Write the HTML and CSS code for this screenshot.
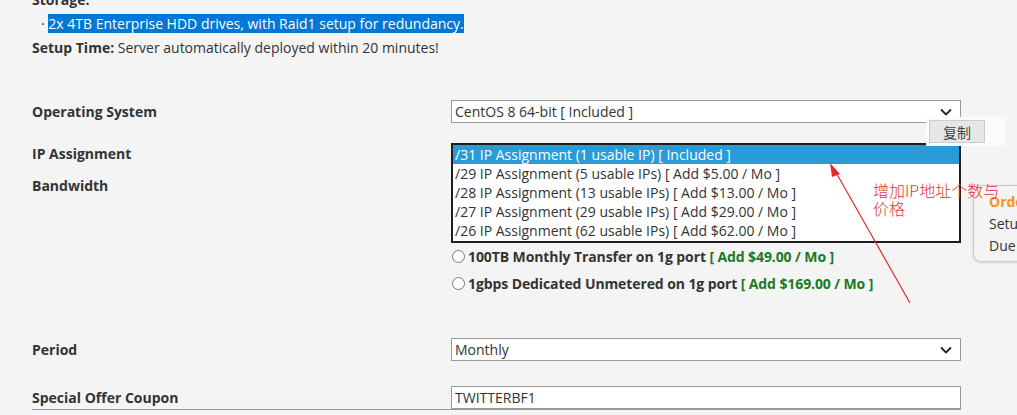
FILE: index.html
```html
<!DOCTYPE html>
<html lang="en">
  <head>
    <meta charset="utf-8">
    <link rel="stylesheet" href="styles.css">
  </head>
  <body>
    <div class="page">
      <div class="info">
        <div><strong>Storage:</strong></div>
        <div class="bullet">&middot; <span class="picked">2x 4TB Enterprise HDD drives, with Raid1 setup for redundancy.</span></div>
        <div><strong>Setup Time:</strong> Server automatically deployed within 20 minutes!</div>
      </div>

      <div class="row row-os">
        <label class="field-label">Operating System</label>
        <div class="select">
          <span>CentOS 8 64-bit [ Included ]</span>
          <svg class="chevron" width="12" height="8" viewBox="0 0 12 8"><path d="M1 1.5l5 5 5-5" fill="none" stroke="#222" stroke-width="1.8"/></svg>
        </div>
      </div>

      <div class="row row-ip">
        <div class="labels">
          <label class="field-label ip-label">IP Assignment</label>
          <label class="field-label bw-label">Bandwidth</label>
        </div>
        <div class="fields">
          <ul class="listbox">
            <li class="selected">/31 IP Assignment (1 usable IP) [ Included ]</li>
            <li>/29 IP Assignment (5 usable IPs) [ Add $5.00 / Mo ]</li>
            <li>/28 IP Assignment (13 usable IPs) [ Add $13.00 / Mo ]</li>
            <li>/27 IP Assignment (29 usable IPs) [ Add $29.00 / Mo ]</li>
            <li>/26 IP Assignment (62 usable IPs) [ Add $62.00 / Mo ]</li>
          </ul>
          <div class="radio-row"><span class="radio"></span><span class="opt">100TB Monthly Transfer on 1g port <span class="price">[ Add $49.00 / Mo ]</span></span></div>
          <div class="radio-row"><span class="radio"></span><span class="opt">1gbps Dedicated Unmetered on 1g port <span class="price">[ Add $169.00 / Mo ]</span></span></div>
        </div>
      </div>

      <div class="row row-period">
        <label class="field-label">Period</label>
        <div class="select">
          <span>Monthly</span>
          <svg class="chevron" width="12" height="8" viewBox="0 0 12 8"><path d="M1 1.5l5 5 5-5" fill="none" stroke="#222" stroke-width="1.8"/></svg>
        </div>
      </div>

      <div class="row row-coupon">
        <label class="field-label">Special Offer Coupon</label>
        <input class="coupon" type="text" value="TWITTERBF1">
      </div>

      <!-- floating bits over the form -->
      <div class="summary">
        <div class="summary-title">Order Summary</div>
        <div>Setup Fee</div>
        <div>Due Today</div>
      </div>

      <div class="copy-pop">
        <button class="copy-btn">复制</button>
      </div>

      <svg class="arrow" width="120" height="160" viewBox="0 0 120 160">
        <line x1="100" y1="148" x2="24" y2="14" stroke="#e52a2a" stroke-width="1.2"/>
        <path d="M20 8 L30 19 L22 22 Z" fill="#e52a2a"/>
      </svg>
      <div class="note">增加IP地址个数与<br>价格</div>
    </div>
  </body>
</html>
```

FILE: styles.css
```css
body {
  margin: 0;
  background-color: #f4f4f4;
  font-family: "Open Sans", "Noto Sans", sans-serif;
  font-size: 14px;
  color: #333;
}

.page {
  position: relative;
  width: 1017px;
  height: 415px;
  overflow: hidden;
  padding-left: 32px;
  box-sizing: border-box;
}

.info {
  margin-top: -12px;
  line-height: 24px;
}

.bullet {
  padding-left: 9px;
}

.picked {
  background-color: #0078d7;
  color: #fff;
}

.row {
  display: grid;
  grid-template-columns: 419px 510px;
}

.field-label {
  font-weight: bold;
}

.row-os {
  margin-top: 40px;
  align-items: center;
}

.select {
  display: flex;
  align-items: center;
  justify-content: space-between;
  height: 23px;
  box-sizing: border-box;
  border: 1px solid #999;
  background-color: #fff;
  padding: 0 8px 0 3px;
}

.row-ip {
  margin-top: 20px;
}

.labels {
  display: flex;
  flex-direction: column;
}

.ip-label {
  line-height: 22px;
}

.bw-label {
  margin-top: 11px;
  line-height: 20px;
}

.listbox {
  list-style: none;
  margin: 0;
  padding: 0;
  border: 2px solid #1e1e1e;
  background-color: #fff;
  height: 100px;
  box-sizing: border-box;
}

.listbox li {
  height: 19px;
  line-height: 19px;
  padding-left: 2px;
  white-space: nowrap;
}

.listbox .selected {
  background-color: #2b9bd8;
  color: #fff;
}

.radio-row {
  display: flex;
  align-items: center;
  line-height: 27px;
}

.opt {
  font-weight: bold;
  letter-spacing: -0.1px;
  white-space: nowrap;
}

.radio {
  width: 11px;
  height: 11px;
  border: 1px solid #777;
  border-radius: 50%;
  background-color: #fff;
  margin: 0 3px 0 1px;
}

.price {
  color: #1b7a1b;
}

.row-period {
  margin-top: 41px;
  align-items: center;
}

.row-coupon {
  margin-top: 25px;
  align-items: center;
  border-bottom: 1px solid #999;
  width: 929px;
}

.coupon {
  height: 23px;
  box-sizing: border-box;
  border: 1px solid #999;
  padding: 0 3px;
  font-family: "Open Sans", sans-serif;
  font-size: 14px;
  color: #333;
  background-color: #fff;
}

.summary {
  position: absolute;
  left: 973px;
  top: 185px;
  width: 120px;
  height: 77px;
  box-sizing: border-box;
  border: 1px solid #c8c8c8;
  border-radius: 8px;
  background-color: #f4f4f4;
  box-shadow: 0 1px 3px rgba(0, 0, 0, 0.15);
  padding: 5px 0 0 15px;
  line-height: 22px;
  white-space: nowrap;
}

.summary-title {
  color: #f7941d;
  font-weight: bold;
}

.copy-pop {
  position: absolute;
  left: 926px;
  top: 117px;
  width: 80px;
  height: 29px;
  background-color: #fbfbfb;
  padding: 3px 0 0 3px;
  box-sizing: border-box;
}

.copy-btn {
  width: 56px;
  height: 23px;
  border: 1px solid #ccc;
  background-color: #e6e6e6;
  font-family: "Noto Sans CJK SC", sans-serif;
  font-size: 14px;
  color: #444;
  padding: 0;
  line-height: 20px;
}

.arrow {
  position: absolute;
  left: 810px;
  top: 155px;
}

.note {
  position: absolute;
  left: 873px;
  top: 181px;
  font-family: "Noto Sans CJK SC", sans-serif;
  font-weight: 300;
  font-size: 16px;
  line-height: 18px;
  color: #e53333;
  white-space: nowrap;
}
```
